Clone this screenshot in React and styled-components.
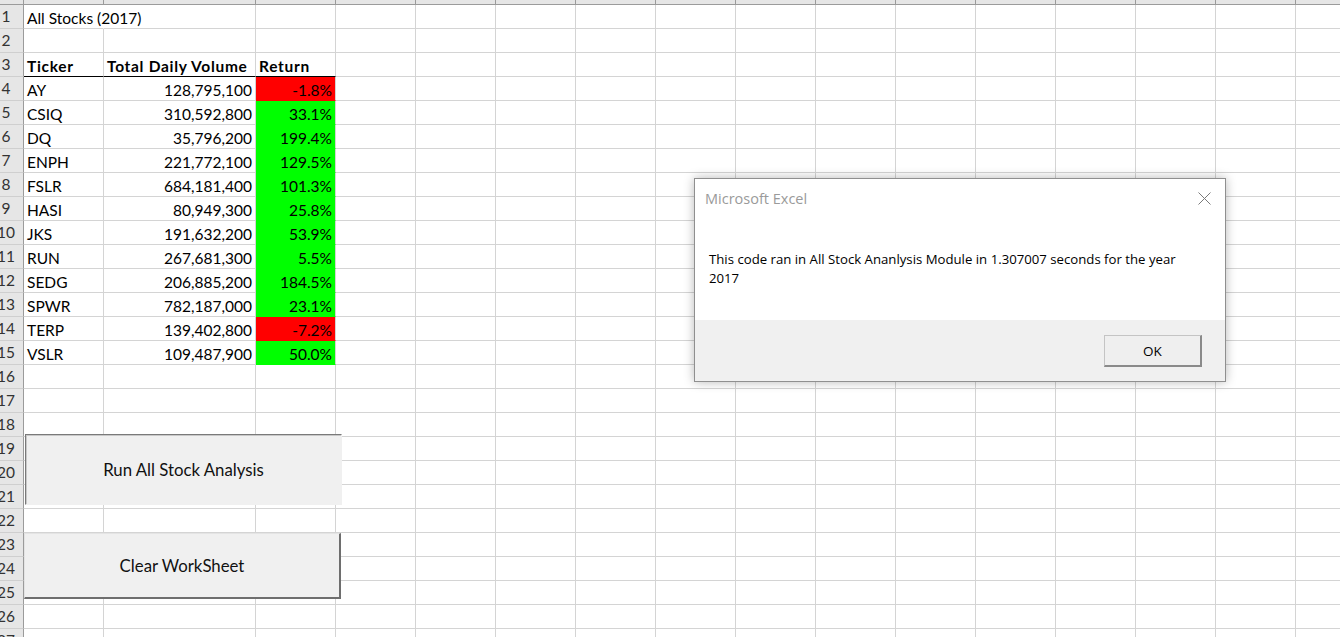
import React from "react";
import styled, { createGlobalStyle } from "styled-components";

const GlobalStyle = createGlobalStyle`
  html, body {
    margin: 0;
    padding: 0;
    background: #fff;
    overflow: hidden;
  }
`;

const GRID = "#d4d4d4";
const HEAD_LINE = "#9b9b9b";
const GREEN = "#00ff00";
const RED = "#ff0000";

const COLS = [80, 152, 80, ...Array(13).fill(80)];

const stocks = [
  ["AY", "128,795,100", "-1.8%"],
  ["CSIQ", "310,592,800", "33.1%"],
  ["DQ", "35,796,200", "199.4%"],
  ["ENPH", "221,772,100", "129.5%"],
  ["FSLR", "684,181,400", "101.3%"],
  ["HASI", "80,949,300", "25.8%"],
  ["JKS", "191,632,200", "53.9%"],
  ["RUN", "267,681,300", "5.5%"],
  ["SEDG", "206,885,200", "184.5%"],
  ["SPWR", "782,187,000", "23.1%"],
  ["TERP", "139,402,800", "-7.2%"],
  ["VSLR", "109,487,900", "50.0%"],
];

const Frame = styled.div`
  position: relative;
  width: 1340px;
  height: 637px;
  overflow: hidden;
  background: #fff;
  font-family: Lato, "Liberation Sans", sans-serif;
`;

const Sheet = styled.div`
  display: flex;
  flex-direction: column;
`;

const Row = styled.div`
  display: flex;
  flex: 0 0 auto;
`;

const Corner = styled.div`
  flex: 0 0 35px;
  margin-left: -11px;
  height: 5px;
  box-sizing: border-box;
  background: #e6e6e6;
  border-right: 1px solid ${HEAD_LINE};
  border-bottom: 1px solid ${HEAD_LINE};
`;

const ColHead = styled.div`
  flex: 0 0 ${(p) => p.$w}px;
  height: 5px;
  box-sizing: border-box;
  background: #e6e6e6;
  border-right: 1px solid ${HEAD_LINE};
  border-bottom: 1px solid ${HEAD_LINE};
`;

const RowHead = styled.div`
  flex: 0 0 35px;
  margin-left: -11px;
  height: 24px;
  box-sizing: border-box;
  background: #e6e6e6;
  border-right: 1px solid ${HEAD_LINE};
  border-bottom: 1px solid #cfcfcf;
  color: #333;
  font-size: 15.5px;
  line-height: 23px;
  text-align: center;
`;

const Cell = styled.div`
  flex: 0 0 ${(p) => p.$w}px;
  min-width: 0;
  height: 24px;
  box-sizing: border-box;
  display: flex;
  align-items: flex-end;
  justify-content: ${(p) => (p.$right ? "flex-end" : "flex-start")};
  padding: 0 3px 2px 3px;
  border-right: 1px solid ${(p) => (p.$open ? "transparent" : GRID)};
  border-bottom: 1px solid
    ${(p) => (p.$rule ? "#000" : p.$fill ? p.$fill : GRID)};
  background: ${(p) => p.$fill || "transparent"};
  font-size: 15.5px;
  line-height: 16px;
  font-weight: ${(p) => (p.$bold ? 700 : 400)};
  letter-spacing: ${(p) => (p.$bold ? "0.7px" : "0")};
  color: #000;
  white-space: nowrap;
  overflow: visible;
`;

const SheetButton = styled.div`
  position: absolute;
  left: ${(p) => p.$x}px;
  top: ${(p) => p.$y}px;
  width: ${(p) => p.$w}px;
  height: ${(p) => p.$h}px;
  box-sizing: border-box;
  display: flex;
  align-items: center;
  justify-content: center;
  background: #f0f0f0;
  font-size: 16.8px;
  color: #111;
  border: 1px solid transparent;
  ${(p) =>
    p.$pressed
      ? `border-top-color: #7a7a7a; border-left-color: #7a7a7a; box-shadow: inset 1px 1px 0 #c8c8c8;`
      : `border-top-color: #e4e4e4; border-left-color: #e4e4e4; border-right: 2px solid #6e6e6e; border-bottom: 2px solid #6e6e6e;`}
`;

const Dialog = styled.div`
  position: absolute;
  left: 694px;
  top: 178px;
  width: 532px;
  height: 204px;
  box-sizing: border-box;
  display: flex;
  flex-direction: column;
  background: #fff;
  border: 1px solid #8f8f8f;
  box-shadow: 0 0 10px rgba(0, 0, 0, 0.28);
  font-family: "Open Sans", "Noto Sans", sans-serif;
`;

const TitleBar = styled.div`
  flex: 0 0 38px;
  display: flex;
  align-items: center;
  justify-content: space-between;
  padding: 0 14px 0 10px;
`;

const Title = styled.span`
  font-size: 14.5px;
  color: #9a9a9a;
`;

const Message = styled.div`
  flex: 1 1 auto;
  padding: 33px 20px 0 14px;
  font-size: 13.2px;
  line-height: 19px;
  color: #000;
`;

const Footer = styled.div`
  flex: 0 0 61px;
  display: flex;
  justify-content: flex-end;
  align-items: flex-start;
  padding: 15px 23px 0 0;
  box-sizing: border-box;
  background: #f0f0f0;
`;

const OkButton = styled.div`
  width: 98px;
  height: 32px;
  box-sizing: border-box;
  display: flex;
  align-items: center;
  justify-content: center;
  background: #efefef;
  border: 1px solid #c4c4c4;
  border-right: 2px solid #8a8a8a;
  border-bottom: 2px solid #8a8a8a;
  font-size: 13.5px;
  color: #000;
`;

const CloseIcon = () => (
  <svg width="13" height="13" viewBox="0 0 13 13">
    <path d="M0.5 0.5 L12.5 12.5 M12.5 0.5 L0.5 12.5" stroke="#7a7a7a" strokeWidth="1" fill="none" />
  </svg>
);

const rowCells = (n) => {
  if (n === 1) return { 0: { text: "All Stocks (2017)", open: true } };
  if (n === 3)
    return {
      0: { text: "Ticker", bold: true, rule: true },
      1: { text: "Total Daily Volume", bold: true, rule: true },
      2: { text: "Return", bold: true, rule: true },
    };
  const s = stocks[n - 4];
  if (!s) return {};
  return {
    0: { text: s[0] },
    1: { text: s[1], right: true },
    2: { text: s[2], right: true, fill: s[2].startsWith("-") ? RED : GREEN },
  };
};

const App = () => {
  const rows = Array.from({ length: 27 }, (_, i) => i + 1);
  return (
    <>
      <GlobalStyle />
      <Frame>
        <Sheet>
          <Row>
            <Corner />
            {COLS.map((w, i) => (
              <ColHead key={i} $w={w} />
            ))}
          </Row>
          {rows.map((n) => {
            const data = rowCells(n);
            return (
              <Row key={n}>
                <RowHead>{n}</RowHead>
                {COLS.map((w, i) => {
                  const c = data[i] || {};
                  return (
                    <Cell
                      key={i}
                      $w={w}
                      $right={c.right}
                      $bold={c.bold}
                      $fill={c.fill}
                      $rule={c.rule}
                      $open={c.open}
                    >
                      {c.text}
                    </Cell>
                  );
                })}
              </Row>
            );
          })}
        </Sheet>

        <SheetButton $x={25} $y={434} $w={317} $h={71} $pressed>
          Run All Stock Analysis
        </SheetButton>
        <SheetButton $x={24} $y={533} $w={317} $h={66}>
          Clear WorkSheet
        </SheetButton>

        <Dialog>
          <TitleBar>
            <Title>Microsoft Excel</Title>
            <CloseIcon />
          </TitleBar>
          <Message>
            This code ran in All Stock Ananlysis Module in 1.307007 seconds for the year
            <br />
            2017
          </Message>
          <Footer>
            <OkButton>OK</OkButton>
          </Footer>
        </Dialog>
      </Frame>
    </>
  );
};

export default App;
